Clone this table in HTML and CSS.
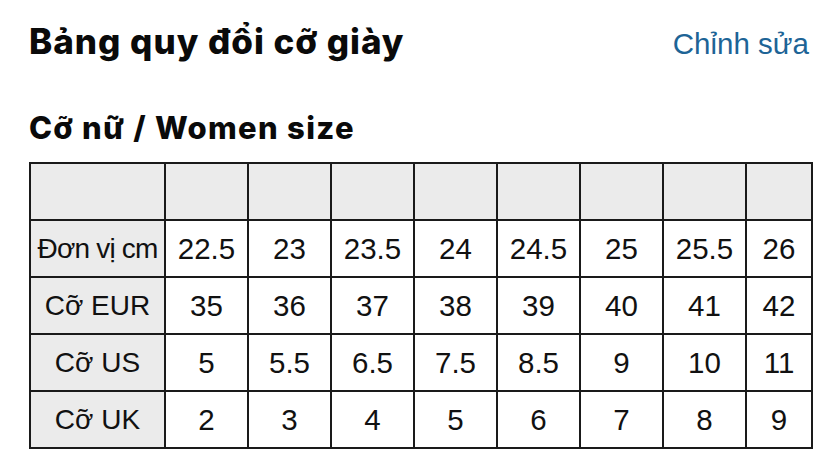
FILE: index.html
```html
<!DOCTYPE html>
<html lang="vi">
<head>
<meta charset="utf-8">
<title>Bảng quy đổi cỡ giày</title>
<link rel="stylesheet" href="styles.css">
</head>
<body>
<div class="page">
  <header class="top">
    <h1 class="title">Bảng quy đổi cỡ giày</h1>
    <a class="edit" href="#">Chỉnh sửa</a>
  </header>
  <h2 class="subtitle">Cỡ nữ / Women size</h2>
  <table class="sizes">
    <colgroup>
      <col class="c-label"><col class="c-num"><col class="c-num"><col class="c-num"><col class="c-num"><col class="c-num"><col class="c-num"><col class="c-num"><col class="c-last">
    </colgroup>
    <tr class="head"><th></th><th></th><th></th><th></th><th></th><th></th><th></th><th></th><th></th></tr>
    <tr><th class="label tight">Đơn vị cm</th><td>22.5</td><td>23</td><td>23.5</td><td>24</td><td>24.5</td><td>25</td><td>25.5</td><td>26</td></tr>
    <tr><th class="label">Cỡ EUR</th><td>35</td><td>36</td><td>37</td><td>38</td><td>39</td><td>40</td><td>41</td><td>42</td></tr>
    <tr><th class="label">Cỡ US</th><td>5</td><td>5.5</td><td>6.5</td><td>7.5</td><td>8.5</td><td>9</td><td>10</td><td>11</td></tr>
    <tr><th class="label">Cỡ UK</th><td>2</td><td>3</td><td>4</td><td>5</td><td>6</td><td>7</td><td>8</td><td>9</td></tr>
  </table>
</div>
</body>
</html>
```

FILE: styles.css
```css
html, body {
  margin: 0;
  padding: 0;
  background: #ffffff;
}
.page {
  padding: 24px 29px 0 29px;
  font-family: "Liberation Sans", Arial, sans-serif;
  color: #111;
}
.top {
  display: flex;
  justify-content: space-between;
  align-items: flex-start;
}
.title {
  margin: 0;
  font-family: Inter, "Liberation Sans", sans-serif;
  font-weight: 800;
  font-size: 35px;
  line-height: 35px;
  letter-spacing: 1px;
  color: #0a0a0a;
}
.edit {
  font-size: 29.5px;
  line-height: 35px;
  color: #1d6496;
  text-decoration: none;
  margin-right: 1px;
  margin-top: 2px;
}
.subtitle {
  margin: 51px 0 19px 0;
  font-family: Inter, "Liberation Sans", sans-serif;
  font-weight: 800;
  font-size: 31px;
  line-height: 31px;
  letter-spacing: 1.3px;
  color: #0a0a0a;
}
.sizes {
  border-collapse: collapse;
  table-layout: fixed;
  width: 782px;
  font-size: 29.5px;
}
.c-label { width: 135px; }
.c-num { width: 83px; }
.c-last { width: 66px; }
.sizes th, .sizes td {
  border: 2px solid #1a1a1a;
  height: 55px;
  padding: 0;
  text-align: center;
  font-weight: 400;
  white-space: nowrap;
  color: #111;
}
.head th { background: #ebebeb; }
.label { background: #ebebeb; font-size: 28px; }
.tight { letter-spacing: -0.8px; }
```
